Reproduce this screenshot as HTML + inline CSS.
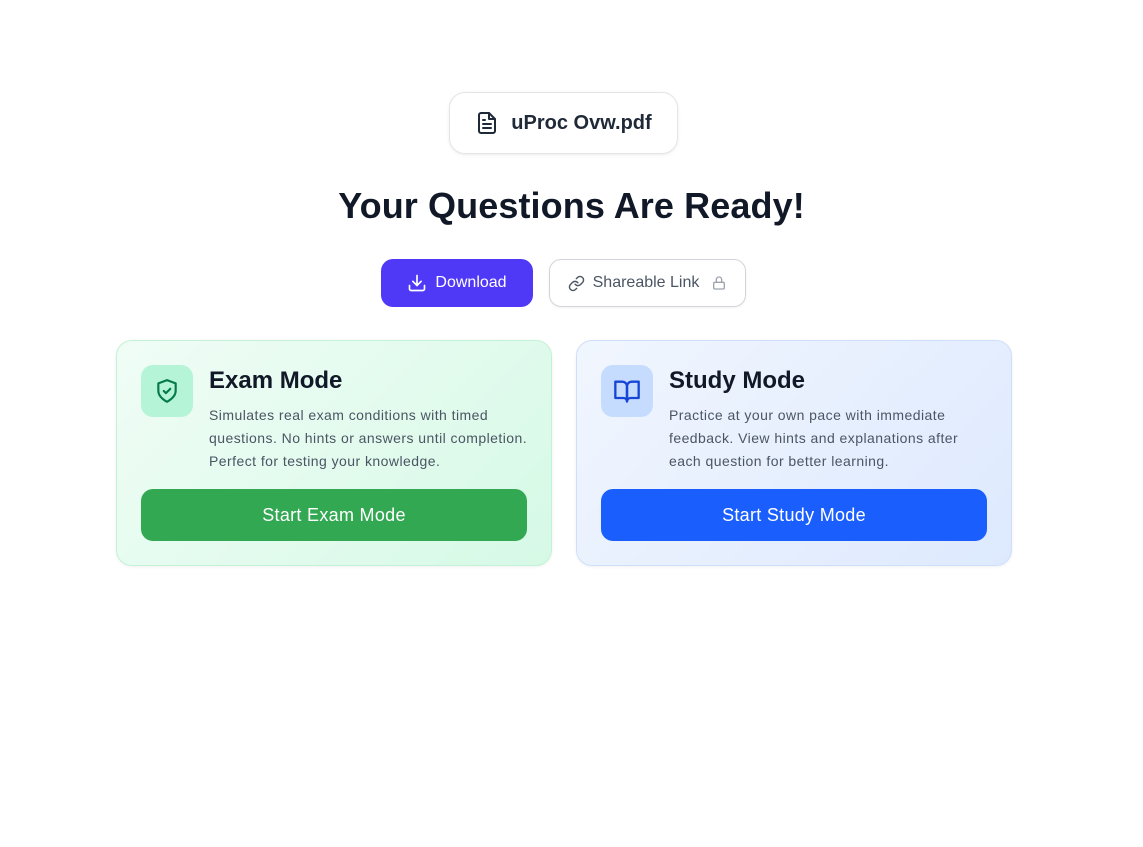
<!DOCTYPE html>
<html><head><style>
*{box-sizing:border-box;margin:0;padding:0}
body{width:1143px;height:847px;background:#fff;font-family:"Liberation Sans",sans-serif;position:relative;overflow:hidden}
.chip{position:absolute;left:449px;top:92px;width:229px;height:62px;border:1px solid #e3e5e8;border-radius:16px;box-shadow:0 1px 3px rgba(0,0,0,.08);display:flex;align-items:center;justify-content:center;gap:12px;font-weight:bold;font-size:20px;color:#1f2937}
h1{position:absolute;top:185px;left:0;width:1143px;text-align:center;font-size:36px;font-weight:bold;color:#111827;letter-spacing:.1px}
.btn{position:absolute;top:259px;height:48px;border-radius:12px;display:flex;align-items:center;justify-content:center;gap:8px;font-size:16px}
.dl{left:381px;width:152px;background:#4f39f6;color:#fff}
.sh{left:549px;width:197px;border:1px solid #d1d5db;color:#4b5563;box-shadow:0 1px 2px rgba(0,0,0,.06)}
.card{position:absolute;top:340px;width:436px;height:226px;border-radius:16px;box-shadow:0 1px 3px rgba(0,0,0,.06)}
.c1{left:116px;background:linear-gradient(135deg,#f0fdf6,#d6f9e6);border:1px solid #c3f2d7}
.c2{left:576px;background:linear-gradient(135deg,#f1f6fe,#dde9fe);border:1px solid #cfdffb}
.ic{position:absolute;left:24px;top:24px;width:52px;height:52px;border-radius:12px;display:flex;align-items:center;justify-content:center}
.c1 .ic{background:#b5f4d6}.c2 .ic{background:#c6dcfe}
.t{position:absolute;left:92px;top:26px;font-size:24px;font-weight:bold;color:#111827}
.d{position:absolute;left:92px;top:63px;width:322px;font-size:14px;line-height:23px;color:#4b5563;letter-spacing:.45px}
.b{position:absolute;left:24px;top:148px;width:386px;height:52px;border-radius:12px;color:#fff;font-size:18px;letter-spacing:.3px;display:flex;align-items:center;justify-content:center}
.c1 .b{background:#33a852}.c2 .b{background:#1a5ffe}
</style></head><body>
<div class="chip"><svg width="24" height="24" viewBox="0 0 24 24" fill="none" stroke="#1f2937" stroke-width="2" stroke-linecap="round" stroke-linejoin="round"><path d="M14 2H6a2 2 0 0 0-2 2v16a2 2 0 0 0 2 2h12a2 2 0 0 0 2-2V8z"/><path d="M14 2v6h6M16 13H8M16 17H8M10 9H8"/></svg>uProc Ovw.pdf</div>
<h1>Your Questions Are Ready!</h1>
<div class="btn dl"><svg width="20" height="20" viewBox="0 0 24 24" fill="none" stroke="#fff" stroke-width="2" stroke-linecap="round" stroke-linejoin="round"><path d="M21 15v4a2 2 0 0 1-2 2H5a2 2 0 0 1-2-2v-4M7 10l5 5 5-5M12 15V3"/></svg>Download</div>
<div class="btn sh"><svg width="17" height="17" viewBox="0 0 24 24" fill="none" stroke="#4b5563" stroke-width="2" stroke-linecap="round" stroke-linejoin="round"><path d="M10 13a5 5 0 0 0 7.54.54l3-3a5 5 0 0 0-7.07-7.07l-1.72 1.71"/><path d="M14 11a5 5 0 0 0-7.54-.54l-3 3a5 5 0 0 0 7.07 7.07l1.71-1.71"/></svg>Shareable Link<svg style="margin-left:4px" width="16" height="16" viewBox="0 0 24 24" fill="none" stroke="#9ca3af" stroke-width="2" stroke-linecap="round" stroke-linejoin="round"><rect x="4" y="11" width="16" height="10" rx="2"/><path d="M8 11V7a4 4 0 0 1 8 0v4"/></svg></div>
<div class="card c1"><div class="ic"><svg width="26" height="26" viewBox="0 0 24 24" fill="none" stroke="#047a4a" stroke-width="2" stroke-linecap="round" stroke-linejoin="round"><path d="M12 22s8-4 8-10V5l-8-3-8 3v7c0 6 8 10 8 10z"/><path d="M9 12l2 2 4-4"/></svg></div><div class="t">Exam Mode</div><div class="d">Simulates real exam conditions with timed questions. No hints or answers until completion. Perfect for testing your knowledge.</div><div class="b">Start Exam Mode</div></div>
<div class="card c2"><div class="ic"><svg width="28" height="28" viewBox="0 0 24 24" fill="none" stroke="#1746d6" stroke-width="2" stroke-linecap="round" stroke-linejoin="round"><path d="M2 4h6a4 4 0 0 1 4 4v13a3 3 0 0 0-3-3H2z"/><path d="M22 4h-6a4 4 0 0 0-4 4v13a3 3 0 0 1 3-3h7z"/></svg></div><div class="t">Study Mode</div><div class="d">Practice at your own pace with immediate feedback. View hints and explanations after each question for better learning.</div><div class="b">Start Study Mode</div></div>
</body></html>
